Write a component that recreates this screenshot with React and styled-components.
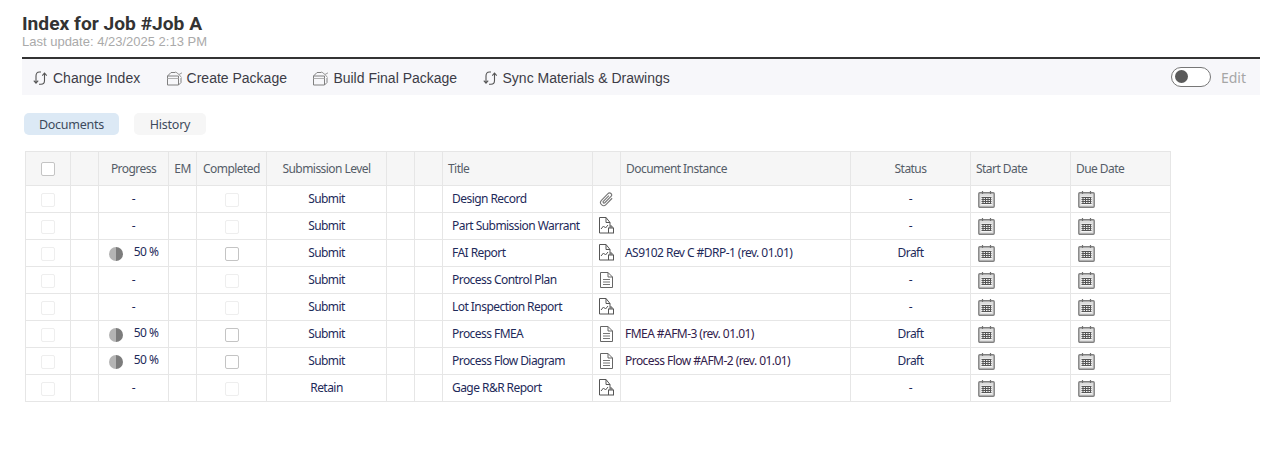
import React from "react";
import styled, { createGlobalStyle } from "styled-components";

const Global = createGlobalStyle`
  html, body { margin: 0; padding: 0; background: #fff; }
  body { font-family: "Liberation Sans", Arial, sans-serif; }
`;

const Page = styled.div`
  width: 1282px;
  height: 462px;
  padding: 12px 22px 0;
  box-sizing: border-box;
  overflow: hidden;
`;
const Title = styled.h1`
  margin: 0;
  font: 700 19.2px/23px Roboto, sans-serif;
  color: #333;
`;
const Updated = styled.div`
  font: 13px/14px "Liberation Sans", sans-serif;
  color: #aaa;
  margin-bottom: 8px;
`;
const Toolbar = styled.div`
  display: flex;
  align-items: center;
  box-sizing: border-box;
  height: 38px;
  border-top: 2px solid #333;
  background: #f7f7fa;
  padding: 2px 14px 0 11px;
`;
const ToolButton = styled.div`
  display: flex;
  align-items: center;
  gap: 4px;
  margin-right: 25.4px;
  font-size: 14px;
  color: #3c3c46;
`;
const Spacer = styled.div`
  flex: 1;
`;
const Switch = styled.div`
  box-sizing: border-box;
  width: 40px;
  height: 20px;
  border: 1px solid #777;
  border-radius: 10px;
  background: #fff;
  padding: 2px 3px;
  margin: 0 10px 2px 0;
`;
const Knob = styled.div`
  width: 13px;
  height: 13px;
  border-radius: 50%;
  background: #5a5a5a;
`;
const EditLabel = styled.span`
  font: 14px "Noto Sans", sans-serif;
  color: #a6a6a6;
  margin-bottom: 2px;
`;
const Tabs = styled.div`
  display: flex;
  gap: 15px;
  margin: 18px 0 16px 2px;
`;
const Tab = styled.div`
  width: ${(p) => p.$w}px;
  height: 22px;
  text-align: center;
  border-radius: 5px;
  font: 12.5px/23px "Noto Sans", sans-serif;
  letter-spacing: -0.25px;
  color: #3d4a5c;
  background: ${(p) => (p.$active ? "#dce9f5" : "#f6f6f6")};
`;
const Grid = styled.div`
  display: grid;
  grid-template-columns: 45px 28px 70px 28px 70px 120px 28px 28px 150px 28px 230px 120px 100px 100px;
  width: 1146px;
  margin-left: 3px;
  border-left: 1px solid #e6e6e6;
  border-top: 1px solid #e6e6e6;
  box-sizing: border-box;
  grid-auto-rows: 27px;
  grid-template-rows: 34px;
`;
const Head = styled.div`
  display: flex;
  align-items: center;
  justify-content: ${(p) => p.$align || "center"};
  padding-left: ${(p) => p.$pl || 0}px;
  background: #f6f6f6;
  border-right: 1px solid #e6e6e6;
  border-bottom: 1px solid #e6e6e6;
  font: 12px "Noto Sans", sans-serif;
  letter-spacing: -0.55px;
  color: #555d68;
  white-space: nowrap;
`;
const Cell = styled.div`
  display: flex;
  align-items: center;
  justify-content: ${(p) => p.$align || "center"};
  gap: ${(p) => p.$gap || 0}px;
  padding-left: ${(p) => p.$pl || 0}px;
  padding-bottom: 1px;
  box-sizing: border-box;
  border-right: 1px solid #e6e6e6;
  border-bottom: 1px solid #e6e6e6;
  font: 12px "Noto Sans", sans-serif;
  letter-spacing: -0.55px;
  color: ${(p) => p.$color || "#1e2a5a"};
  white-space: nowrap;
`;
const Check = styled.div`
  box-sizing: border-box;
  width: 14px;
  height: 14px;
  margin-top: 2px;
  border-radius: 2px;
  border: 1px solid ${(p) => (p.$on ? "#c4c4c4" : "#eeeeee")};
  background: #fff;
`;
const HeadCheck = styled(Check)`
  margin-top: 0;
  border-color: #c4c4c4;
`;
const Pie = styled.div`
  width: 14px;
  height: 14px;
  margin-top: 2px;
  border-radius: 50%;
  background: linear-gradient(90deg, #b4b4b4 50%, #7c7c7c 50%);
`;
const Percent = styled.span`
  margin-bottom: 2px;
`;

const Sync = () => (
  <svg width="16" height="16" viewBox="0 0 16 16" fill="none" stroke="#555" strokeWidth="1.1">
    <path d="M8 2 H6.5 Q3 2 3 6 V13 M.8 10.6 L3 13.2 L5.2 10.6" />
    <path d="M6 14.3 H8 Q11.5 14.3 11.5 10.5 V3 M9.3 5.6 L11.5 3 L13.7 5.6" />
  </svg>
);
const Box = () => (
  <svg width="17" height="15" viewBox="0 0 17 15" fill="none" stroke="#808080" strokeWidth="1">
    <path d="M1.5 5 H12.5 V14 H1.5 Z" />
    <path d="M1.5 5 L5 1.5 H9.5" />
    <path d="M12.5 14 L15 11.5 V7" />
    <path d="M1.5 7.5 H12.5" stroke="#b0b0b0" />
    <path d="M9.5 .8 L13 3.5 L16 1.8 M13 3.5 L15.5 6.5" stroke="#9a9a9a" />
  </svg>
);
const Clip = () => (
  <svg width="15" height="16" viewBox="0 0 16 16" fill="none" stroke="#777" strokeWidth="1.2">
    <path d="M14 7.2 L7.4 14 a3.3 3.3 0 0 1 -4.8 -4.6 L9.6 2.2 a2.2 2.2 0 0 1 3.2 3.1 L6.2 12 a1.1 1.1 0 0 1 -1.6 -1.5 L10.6 4.5" />
  </svg>
);
const Chart = () => (
  <svg width="15" height="17" viewBox="0 0 15 17" fill="none" stroke="#555" strokeWidth="1">
    <path d="M11 9 V5.5 L7 .5 H.5 V16 H9" />
    <path d="M7 .5 V5.5 H11" />
    <path d="M2 12 L4.5 9 L6.5 11 L9 8" />
    <rect x="9.5" y="11" width="5" height="5" fill="#fff" />
    <path d="M11 11 V9 H13 V11" />
  </svg>
);
const Doc = () => (
  <svg width="13" height="16" viewBox="0 0 13 16" fill="none" stroke="#666" strokeWidth="1">
    <path d="M.5 .5 H8 L12.5 5 V15.5 H.5 Z" />
    <path d="M8 .5 V5 H12.5" />
    <path d="M3 7.5 H10 M3 10 H10 M3 12.5 H10" stroke="#777" />
  </svg>
);
const Calendar = () => (
  <svg width="17" height="18" viewBox="0 0 17 18" fill="none">
    <rect x=".8" y="2.8" width="15.4" height="14.4" rx="1" fill="#dedede" stroke="#808080" strokeWidth="1.4" />
    <rect x="3" y="6.5" width="11" height="8.5" fill="#f4f4f4" />
    <path d="M3.5 7.5 H13.5 M3.5 9.5 H13.5 M3.5 11.5 H13.5 M3.5 13.5 H13.5 M5 7 V14 M7.5 7 V14 M10 7 V14 M12.5 7 V14" stroke="#555" strokeWidth="1" />
    <path d="M4.5 1 V4 M12.5 1 V4" stroke="#707070" strokeWidth="1.2" />
  </svg>
);

const rows = [
  { level: "Submit", title: "Design Record", icon: Clip, inst: "", status: "-" },
  { level: "Submit", title: "Part Submission Warrant", icon: Chart, inst: "", status: "-" },
  { level: "Submit", title: "FAI Report", icon: Chart, inst: "AS9102 Rev C #DRP-1 (rev. 01.01)", status: "Draft", pct: 50 },
  { level: "Submit", title: "Process Control Plan", icon: Doc, inst: "", status: "-" },
  { level: "Submit", title: "Lot Inspection Report", icon: Chart, inst: "", status: "-" },
  { level: "Submit", title: "Process FMEA", icon: Doc, inst: "FMEA #AFM-3 (rev. 01.01)", status: "Draft", pct: 50, instColor: "#33204a" },
  { level: "Submit", title: "Process Flow Diagram", icon: Doc, inst: "Process Flow #AFM-2 (rev. 01.01)", status: "Draft", pct: 50, instColor: "#33204a" },
  { level: "Retain", title: "Gage R&R Report", icon: Chart, inst: "", status: "-" },
];

export default function App() {
  return (
    <Page>
      <Global />
      <Title>Index for Job #Job A</Title>
      <Updated>Last update: 4/23/2025 2:13 PM</Updated>
      <Toolbar>
        <ToolButton><Sync />Change Index</ToolButton>
        <ToolButton><Box />Create Package</ToolButton>
        <ToolButton><Box />Build Final Package</ToolButton>
        <ToolButton><Sync />Sync Materials &amp; Drawings</ToolButton>
        <Spacer />
        <Switch><Knob /></Switch>
        <EditLabel>Edit</EditLabel>
      </Toolbar>
      <Tabs>
        <Tab $active $w={95}>Documents</Tab>
        <Tab $w={72}>History</Tab>
      </Tabs>
      <Grid>
        <Head><HeadCheck /></Head>
        <Head />
        <Head>Progress</Head>
        <Head>EM</Head>
        <Head>Completed</Head>
        <Head>Submission Level</Head>
        <Head />
        <Head />
        <Head $align="flex-start" $pl={5}>Title</Head>
        <Head />
        <Head $align="flex-start" $pl={5}>Document Instance</Head>
        <Head>Status</Head>
        <Head $align="flex-start" $pl={5}>Start Date</Head>
        <Head $align="flex-start" $pl={5}>Due Date</Head>
        {rows.map((r) => {
          const Icon = r.icon;
          return (
            <React.Fragment key={r.title}>
              <Cell><Check /></Cell>
              <Cell />
              <Cell $gap={11}>
                {r.pct ? <><Pie /><Percent>{r.pct} %</Percent></> : "-"}
              </Cell>
              <Cell />
              <Cell><Check $on={!!r.pct} /></Cell>
              <Cell>{r.level}</Cell>
              <Cell />
              <Cell />
              <Cell $align="flex-start" $pl={9}>{r.title}</Cell>
              <Cell><Icon /></Cell>
              <Cell $align="flex-start" $pl={4} $color={r.instColor}>{r.inst}</Cell>
              <Cell>{r.status}</Cell>
              <Cell $align="flex-start" $pl={7}><Calendar /></Cell>
              <Cell $align="flex-start" $pl={7}><Calendar /></Cell>
            </React.Fragment>
          );
        })}
      </Grid>
    </Page>
  );
}
